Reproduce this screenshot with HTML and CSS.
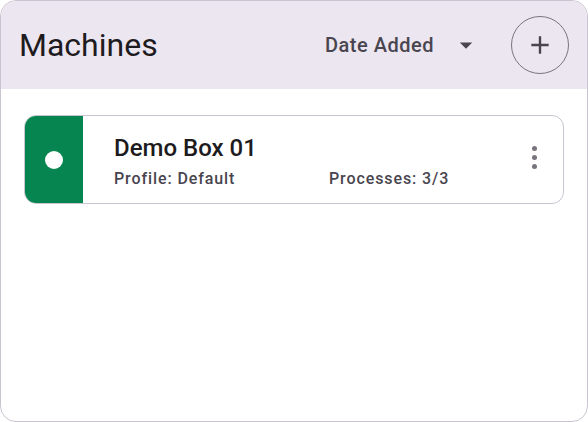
FILE: index.html
```html
<!DOCTYPE html>
<html>
<head>
<meta charset="utf-8">
<link rel="stylesheet" href="styles.css">
</head>
<body>
<div class="panel">
  <header class="header">
    <h1 class="title">Machines</h1>
    <div class="sort">
      <span class="sort-label">Date Added</span>
      <svg class="sort-arrow" width="24" height="24" viewBox="0 0 24 24"><path d="M7 10l5 5 5-5z" fill="#49454f"/></svg>
    </div>
    <button class="add-btn" aria-label="Add">
      <svg width="26" height="26" viewBox="0 0 24 24"><path d="M12 4v16M4 12h16" stroke="#49454f" stroke-width="2.2" fill="none"/></svg>
    </button>
  </header>
  <div class="list">
    <div class="card">
      <div class="status"><span class="dot"></span></div>
      <div class="info">
        <div class="name">Demo Box 01</div>
        <div class="meta">
          <span>Profile: Default</span>
          <span>Processes: 3/3</span>
        </div>
      </div>
      <div class="kebab"><i></i><i></i><i></i></div>
    </div>
  </div>
</div>
</body>
</html>
```

FILE: styles.css
```css
html, body {
  margin: 0;
  padding: 0;
  background: #ffffff;
}
body {
  font-family: Roboto, "Noto Sans", sans-serif;
}
.panel {
  width: 588px;
  height: 422px;
  box-sizing: border-box;
  border: 1px solid #cac4d0;
  border-radius: 16px;
  overflow: hidden;
  background: #ffffff;
}
.header {
  height: 88px;
  background: #ece6f0;
  display: flex;
  align-items: center;
  padding: 0 18px 0 18px;
}
.title {
  margin: 0;
  font-size: 32px;
  font-weight: 400;
  color: #1d1b20;
  flex: 1;
}
.sort {
  display: flex;
  align-items: center;
  gap: 17px;
  margin-right: 30px;
}
.sort-label {
  font-size: 20px;
  font-weight: 500;
  letter-spacing: 0.5px;
  color: #49454f;
}
.sort-arrow {
  width: 30px;
  height: 30px;
}
.add-btn {
  width: 58px;
  height: 58px;
  border-radius: 50%;
  border: 1px solid #79747e;
  background: transparent;
  display: flex;
  align-items: center;
  justify-content: center;
  padding: 0;
}
.list {
  padding: 26px 23px 0 23px;
}
.card {
  height: 89px;
  box-sizing: border-box;
  border: 1px solid #cac4d0;
  border-radius: 12px;
  overflow: hidden;
  display: flex;
  align-items: stretch;
}
.status {
  width: 58px;
  background: #068550;
  display: flex;
  align-items: center;
  justify-content: center;
}
.dot {
  width: 18px;
  height: 18px;
  border-radius: 50%;
  background: #ffffff;
}
.info {
  flex: 1;
  padding-left: 31px;
  padding-top: 2px;
  display: flex;
  flex-direction: column;
  justify-content: center;
  gap: 7px;
}
.name {
  font-size: 24px;
  font-weight: 500;
  color: #1d1b20;
}
.meta {
  display: grid;
  grid-template-columns: 215px 1fr;
  font-size: 16px;
  font-weight: 500;
  letter-spacing: 0.9px;
  color: #49454f;
}
.kebab {
  width: 58px;
  display: flex;
  flex-direction: column;
  align-items: center;
  justify-content: center;
  gap: 4px;
  padding-bottom: 4px;
}
.kebab i {
  width: 5px;
  height: 5px;
  border-radius: 50%;
  background: #79747e;
}
```
